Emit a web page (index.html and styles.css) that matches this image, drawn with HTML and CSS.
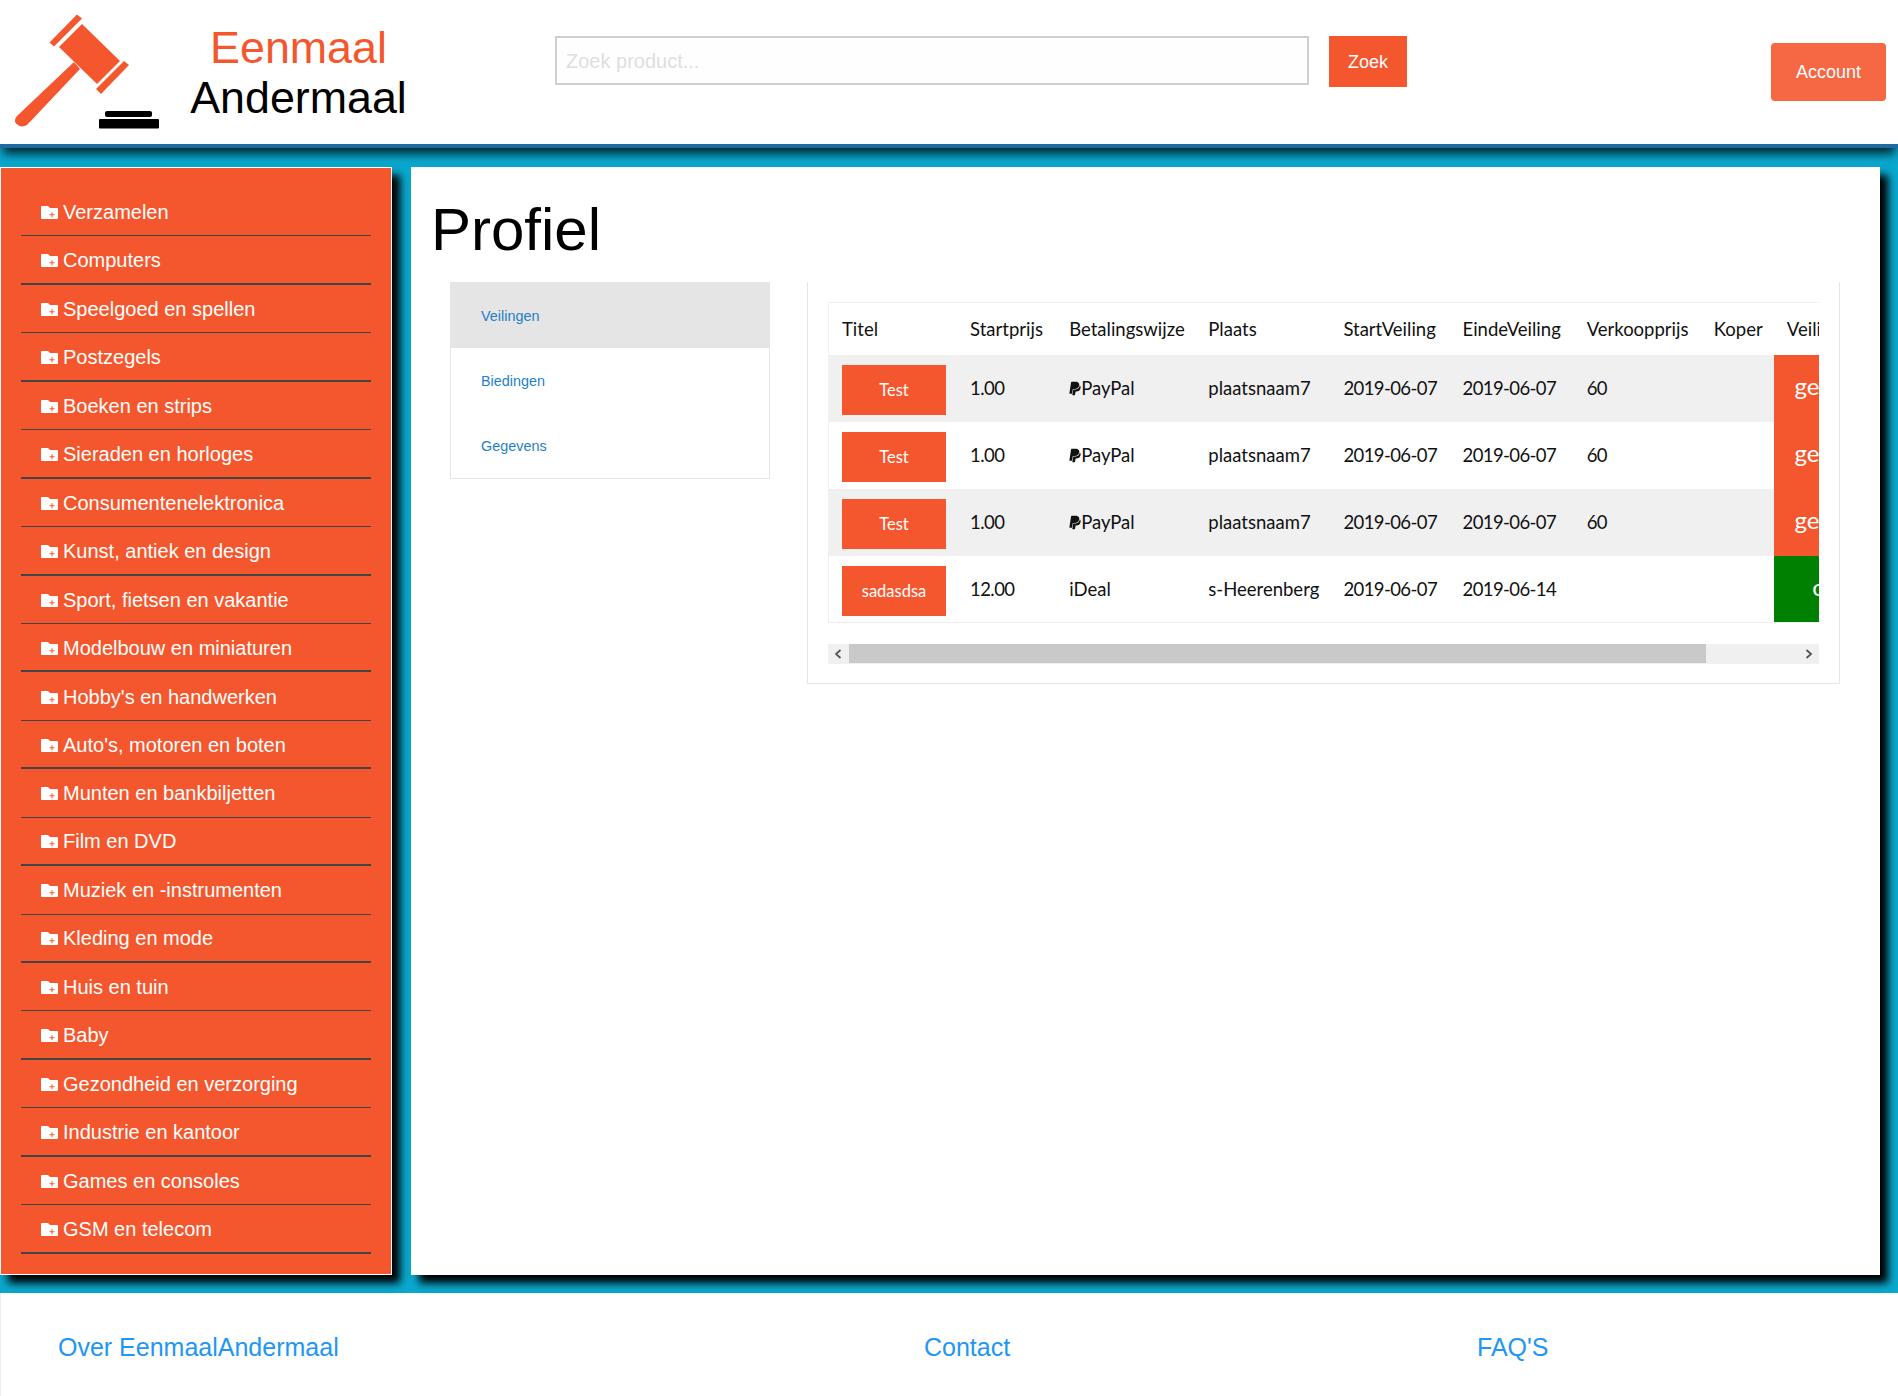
FILE: index.html
```html
<!DOCTYPE html>
<html lang="nl">
<head>
  <meta charset="UTF-8">
  <meta name="viewport" content="width=device-width, initial-scale=1.0">
  <title>Profiel - EenmaalAndermaal</title>
  <link rel="stylesheet" href="styles.css">
</head>
<body>
  <svg class="icon-defs" width="0" height="0">
    <symbol id="folder-plus" viewBox="0 0 17 13">
      <path fill="#fff" d="M1 0h6l2 2h7a1 1 0 0 1 1 1v9a1 1 0 0 1-1 1H1a1 1 0 0 1-1-1V1a1 1 0 0 1 1-1z"/>
      <path fill="#f4572d" d="M10.5 6.2h1v2h2v1h-2v2h-1v-2h-2v-1h2z"/>
    </symbol>
    <symbol id="paypal" viewBox="0 0 384 512">
      <path fill="#111" d="M111.4 295.9c-3.5 19.2-17.4 108.7-21.5 134-.3 1.8-1 2.5-3 2.5H12.3c-7.6 0-13.1-6.6-12.1-13.9L58.8 46.6c1.5-9.6 10.1-16.9 20-16.9 152.3 0 165.1-3.7 204 11.4 60.1 23.3 65.6 79.5 44 140.3-21.5 62.6-72.5 89.5-140.1 90.3-43.4.7-69.5-7-75.3 24.2zM357.1 152c-1.8-1.3-2.5-1.8-3 1.3-2 11.4-5.1 22.5-8.8 33.6-39.9 113.8-150.5 103.9-204.5 103.9-6.1 0-10.1 3.3-10.9 9.4-22.6 140.4-27.1 169.7-27.1 169.7-1 7.1 3.5 12.9 10.6 12.9h63.5c8.6 0 15.7-6.3 17.4-14.9.7-5.4-1.1 6.1 14.4-91.3 4.6-22 14.3-19.7 29.3-19.7 71 0 126.4-28.8 142.9-112.3 6.5-34.8 4.6-71.4-23.8-92.6z"/>
    </symbol>
  </svg>

  <header class="site-header">
    <a class="logo" href="#">
      <svg class="logo-mark" viewBox="0 0 170 135" width="170" height="135">
        <g fill="#f4572d">
          <path d="M49.5 42.5 77 14.500 82 18.500 54 46.500z"/>
          <path d="M59 47 82 24 120 61 97 84z"/>
          <path d="M96 89 124 61 129 65 101 94z"/>
          <path d="M74 62 80 69 27 125Q20 129 15 122Q15 118 17 116z"/>
        </g>
        <rect x="105" y="111" width="47" height="6" rx="2" fill="#000"/>
        <rect x="99" y="119" width="60" height="9.500" rx="1" fill="#000"/>
      </svg>
      <span class="logo-text">
        <span class="logo-top">Eenmaal</span>
        <span class="logo-bottom">Andermaal</span>
      </span>
    </a>
    <form class="search">
      <input class="search-input" type="text" placeholder="Zoek product...">
      <button class="search-btn" type="button">Zoek</button>
    </form>
    <a class="account-btn" href="#">Account</a>
  </header>

  <div class="page">
    <nav class="sidebar">
      <ul class="cat-list">
        <li class="cat"><svg class="cat-icon"><use href="#folder-plus"/></svg>Verzamelen</li>
        <li class="cat"><svg class="cat-icon"><use href="#folder-plus"/></svg>Computers</li>
        <li class="cat"><svg class="cat-icon"><use href="#folder-plus"/></svg>Speelgoed en spellen</li>
        <li class="cat"><svg class="cat-icon"><use href="#folder-plus"/></svg>Postzegels</li>
        <li class="cat"><svg class="cat-icon"><use href="#folder-plus"/></svg>Boeken en strips</li>
        <li class="cat"><svg class="cat-icon"><use href="#folder-plus"/></svg>Sieraden en horloges</li>
        <li class="cat"><svg class="cat-icon"><use href="#folder-plus"/></svg>Consumentenelektronica</li>
        <li class="cat"><svg class="cat-icon"><use href="#folder-plus"/></svg>Kunst, antiek en design</li>
        <li class="cat"><svg class="cat-icon"><use href="#folder-plus"/></svg>Sport, fietsen en vakantie</li>
        <li class="cat"><svg class="cat-icon"><use href="#folder-plus"/></svg>Modelbouw en miniaturen</li>
        <li class="cat"><svg class="cat-icon"><use href="#folder-plus"/></svg>Hobby's en handwerken</li>
        <li class="cat"><svg class="cat-icon"><use href="#folder-plus"/></svg>Auto's, motoren en boten</li>
        <li class="cat"><svg class="cat-icon"><use href="#folder-plus"/></svg>Munten en bankbiljetten</li>
        <li class="cat"><svg class="cat-icon"><use href="#folder-plus"/></svg>Film en DVD</li>
        <li class="cat"><svg class="cat-icon"><use href="#folder-plus"/></svg>Muziek en -instrumenten</li>
        <li class="cat"><svg class="cat-icon"><use href="#folder-plus"/></svg>Kleding en mode</li>
        <li class="cat"><svg class="cat-icon"><use href="#folder-plus"/></svg>Huis en tuin</li>
        <li class="cat"><svg class="cat-icon"><use href="#folder-plus"/></svg>Baby</li>
        <li class="cat"><svg class="cat-icon"><use href="#folder-plus"/></svg>Gezondheid en verzorging</li>
        <li class="cat"><svg class="cat-icon"><use href="#folder-plus"/></svg>Industrie en kantoor</li>
        <li class="cat"><svg class="cat-icon"><use href="#folder-plus"/></svg>Games en consoles</li>
        <li class="cat"><svg class="cat-icon"><use href="#folder-plus"/></svg>GSM en telecom</li>
      </ul>
    </nav>

    <main class="content">
      <h1 class="page-title">Profiel</h1>
      <div class="profile">
        <ul class="tabs">
          <li class="tab tab-active"><a href="#">Veilingen</a></li>
          <li class="tab"><a href="#">Biedingen</a></li>
          <li class="tab"><a href="#">Gegevens</a></li>
        </ul>
        <section class="panel">
          <div class="table-wrap">
            <table class="auctions">
              <thead>
                <tr>
                  <th>Titel</th><th>Startprijs</th><th>Betalingswijze</th><th>Plaats</th><th>StartVeiling</th><th>EindeVeiling</th><th>Verkoopprijs</th><th>Koper</th><th>Veiling</th>
                </tr>
              </thead>
              <tbody>
                <tr>
                  <td><a class="item-btn" href="#">Test</a></td><td class="num">1.00</td>
                  <td><svg class="pay-icon"><use href="#paypal"/></svg>PayPal</td>
                  <td>plaatsnaam7</td><td class="num">2019-06-07</td><td class="num">2019-06-07</td><td class="num">60</td><td></td>
                  <td class="status status-closed">gesloten</td>
                </tr>
                <tr>
                  <td><a class="item-btn" href="#">Test</a></td><td class="num">1.00</td>
                  <td><svg class="pay-icon"><use href="#paypal"/></svg>PayPal</td>
                  <td>plaatsnaam7</td><td class="num">2019-06-07</td><td class="num">2019-06-07</td><td class="num">60</td><td></td>
                  <td class="status status-closed">gesloten</td>
                </tr>
                <tr>
                  <td><a class="item-btn" href="#">Test</a></td><td class="num">1.00</td>
                  <td><svg class="pay-icon"><use href="#paypal"/></svg>PayPal</td>
                  <td>plaatsnaam7</td><td class="num">2019-06-07</td><td class="num">2019-06-07</td><td class="num">60</td><td></td>
                  <td class="status status-closed">gesloten</td>
                </tr>
                <tr>
                  <td><a class="item-btn" href="#">sadasdsa</a></td><td class="num">12.00</td>
                  <td>iDeal</td>
                  <td>s-Heerenberg</td><td class="num">2019-06-07</td><td class="num">2019-06-14</td><td></td><td></td>
                  <td class="status status-open">open</td>
                </tr>
              </tbody>
            </table>
          </div>
          <div class="scrollbar">
            <span class="scroll-arrow">
              <svg viewBox="0 0 8 10" width="8" height="10"><path d="M5.500 1 1 5l4.500 4" fill="none" stroke="#555" stroke-width="1.800"/></svg>
            </span>
            <span class="scroll-thumb"></span>
            <span class="scroll-rest"></span>
            <span class="scroll-arrow">
              <svg viewBox="0 0 8 10" width="8" height="10"><path d="M1.500 1 6 5 1.500 9" fill="none" stroke="#555" stroke-width="1.800"/></svg>
            </span>
          </div>
        </section>
      </div>
    </main>
  </div>

  <footer class="site-footer">
    <a class="foot-link foot-over" href="#">Over EenmaalAndermaal</a>
    <a class="foot-link foot-contact" href="#">Contact</a>
    <a class="foot-link" href="#">FAQ'S</a>
  </footer>
</body>
</html>
```

FILE: styles.css
```css
* { box-sizing: border-box; }
html, body { margin: 0; padding: 0; }
body { font-family: "Liberation Sans", Arial, sans-serif; background: #fff; color: #111; }
a { text-decoration: none; }
ul { list-style: none; margin: 0; padding: 0; }
.icon-defs { position: absolute; }

/* header */
.site-header { position: relative; z-index: 2; display: flex; align-items: flex-start; height: 148px; background: #fff; border-bottom: 4px solid #1f6aa0; box-shadow: 0 9px 9px -3px rgba(0, 0, 0, .75); }
.logo { display: flex; flex: none; width: 555px; height: 144px; }
.logo-mark { flex: none; }
.logo-text { display: flex; flex-direction: column; align-items: center; width: 217px; margin-left: 20px; padding-top: 22px; font-size: 44.8px; line-height: 50px; }
.logo-top { color: #f4572d; }
.logo-bottom { color: #000; }
.search { display: flex; align-items: flex-start; margin-top: 36px; }
.search-input { width: 754px; height: 49px; padding: 2px 9px 0; border: 2px solid #cfcfcf; background: #fefefe; font-family: inherit; font-size: 20px; outline: none; }
.search-input::placeholder { color: #dedede; }
.search-btn { width: 78px; height: 51px; margin-left: 20px; padding: 2px 0 0; border: 0; background: #f4572d; color: #fff; font-family: inherit; font-size: 18px; }
.account-btn { display: flex; align-items: center; justify-content: center; width: 115px; height: 58px; margin: 43px 12px 0 auto; border-radius: 4px; background: #f66743; color: #fff; font-size: 18px; }

/* page */
.page { display: flex; gap: 19px; padding: 19px 18px 18px 0; background: #0aa8ce; }
.sidebar { flex: none; width: 392px; padding: 20px 20px 20px; border: 1px solid #fff; background: #f4572d; box-shadow: 8px 8px 8px #000; }
.cat { display: flex; align-items: center; height: 48.45px; padding: 2px 0 0 20px; border-bottom: 1px solid #444; color: #fff; font-size: 20px; }
.cat:nth-child(even) { border-bottom-width: 2px; }
.cat-icon { flex: none; width: 17px; height: 13px; margin-right: 5px; }

.content { flex: 1; min-width: 0; background: #fff; box-shadow: 8px 8px 8px #000; }
.page-title { margin: 0; padding: 26px 0 0 20px; height: 115px; font-size: 60px; font-weight: 400; line-height: 74px; color: #000; }
.profile { display: flex; align-items: flex-start; gap: 37px; margin: 0 40px 0 39px; }

/* tabs */
.tabs { flex: none; width: 320px; border: 1px solid #e6e6e6; }
.tab { display: flex; align-items: center; height: 65px; padding-left: 30px; font-size: 14.4px; }
.tab a { color: #1f7fc9; }
.tab-active { height: 66px; margin: -1px -1px 0; padding: 2px 0 0 31px; background: #e5e5e5; }

/* table panel */
.panel { flex: 1; min-width: 0; padding: 20px 20px 19px; border: 1px solid #e6e6e6; border-top: 0; }
.table-wrap { overflow: hidden; border: 1px solid #f0f0f0; border-right: 0; }
.auctions { table-layout: fixed; width: 1097px; border-collapse: collapse; font-family: Lato, "Noto Sans", sans-serif; font-size: 18.5px; color: #111; }
.auctions th { height: 52px; padding: 0 13px; font-weight: 400; text-align: left; white-space: nowrap; }
.auctions th:nth-child(1) { width: 128px; }
.auctions th:nth-child(2) { width: 99px; }
.auctions th:nth-child(3) { width: 139px; }
.auctions th:nth-child(4) { width: 135px; }
.auctions th:nth-child(5) { width: 119px; }
.auctions th:nth-child(6) { width: 124px; }
.auctions th:nth-child(7) { width: 127px; }
.auctions th:nth-child(8) { width: 73px; }
.auctions th:nth-child(9) { width: 152px; }
.auctions td { height: 67px; padding: 21px 13px 0; vertical-align: top; line-height: 24px; white-space: nowrap; }
.auctions tbody tr:nth-child(odd) { background: #f0f0f0; }
.auctions tbody tr:last-child td { height: 66px; }
.auctions td:first-child { padding-top: 10px; }
.auctions td.num { letter-spacing: -.6px; }
.auctions td.status { padding: 19px 35px 0 13px; color: #fff; font-size: 24px; text-align: center; }
.status-closed { background: #f4572d; }
.status-open { background: #008000; }
.item-btn { display: block; width: 104px; height: 50px; padding-top: 15px; background: #f4572d; color: #fff; font-size: 16.5px; line-height: 20px; text-align: center; }
.pay-icon { width: 12px; height: 15px; vertical-align: -1px; }

/* fake scrollbar, the table is wider than its box */
.scrollbar { display: flex; height: 20px; margin-top: 21px; background: #f0f0f0; }
.scroll-arrow { display: flex; flex: none; align-items: center; justify-content: center; width: 21px; }
.scroll-thumb { flex: none; width: 857px; height: 19px; background: #c9c9c9; }
.scroll-rest { flex: 1; }

/* footer */
.site-footer { display: flex; height: 104px; padding: 40px 0 0 57px; border-left: 1px solid #eee; background: #fff; font-size: 25px; }
.foot-link { color: #2196f3; }
.foot-over { width: 866px; }
.foot-contact { width: 553px; }
```
